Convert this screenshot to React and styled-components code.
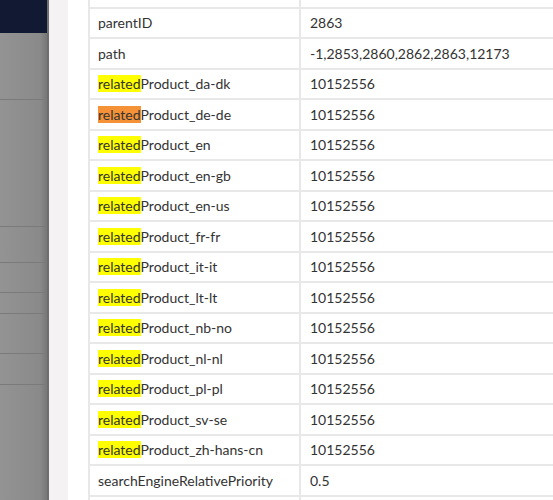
import React from "react";
import styled, { createGlobalStyle } from "styled-components";

const Global = createGlobalStyle`
  html, body { margin: 0; height: 100%; overflow: hidden; }
  body { font-family: Lato, "Liberation Sans", sans-serif; background: #fff; }
`;

const Page = styled.div`
  display: flex;
  height: 500px;
  width: 553px;
  overflow: hidden;
`;

const Sidebar = styled.div`
  width: 47px;
  flex-shrink: 0;
  display: flex;
  flex-direction: column;
  background: linear-gradient(to right, #939393, #8a8a8a 85%, #777);
  border-right: 2px solid #6e6e6e;
`;

const NavTop = styled.div`
  height: 33px;
  background: #121a33;
`;

const NavItem = styled.div`
  height: ${(p) => p.h}px;
  border-bottom: 1px solid #7a7a7a;
`;

const Gutter = styled.div`
  width: 19px;
  flex-shrink: 0;
  background: #f4f2f3;
`;

const Panel = styled.div`
  flex: 1;
  background: #fff;
  padding: 0 0 0 20px;
`;

const Table = styled.div`
  margin-top: -22px;
  border-left: 2px solid #e8e8e8;
`;

const Row = styled.div`
  display: grid;
  grid-template-columns: 209px 1fr;
  height: 28.5px;
  border-bottom: 2px solid #e8e8e8;
`;

const Cell = styled.div`
  display: flex;
  align-items: center;
  padding-left: 8px;
  font-size: 14px;
  color: #333;
  white-space: nowrap;
  & + & { border-left: 2px solid #e8e8e8; padding-left: 9px; }
`;

const Mark = styled.span`
  background: ${(p) => (p.active ? "#f59238" : "#ffff00")};
`;

const langs = ["da-dk", "de-de", "en", "en-gb", "en-us", "fr-fr", "it-it", "lt-lt", "nb-no", "nl-nl", "pl-pl", "sv-se", "zh-hans-cn"];

const rows = [
  { key: "", value: "" },
  { key: "parentID", value: "2863" },
  { key: "path", value: "-1,2853,2860,2862,2863,12173" },
  ...langs.map((l) => ({ mark: true, active: l === "de-de", key: `Product_${l}`, value: "10152556" })),
  { key: "searchEngineRelativePriority", value: "0.5" },
  { key: "", value: "" },
];

export default function App() {
  return (
    <Page>
      <Global />
      <Sidebar>
        <NavTop />
        <NavItem h={66} />
        <NavItem h={126} />
        <NavItem h={35} />
        <NavItem h={29} />
        <NavItem h={20} />
        <NavItem h={39} />
        <NavItem h={30} />
      </Sidebar>
      <Gutter />
      <Panel>
        <Table>
          {rows.map((r, i) => (
            <Row key={i}>
              <Cell>
                {r.mark && <Mark active={r.active}>related</Mark>}
                {r.key}
              </Cell>
              <Cell>{r.value}</Cell>
            </Row>
          ))}
        </Table>
      </Panel>
    </Page>
  );
}
